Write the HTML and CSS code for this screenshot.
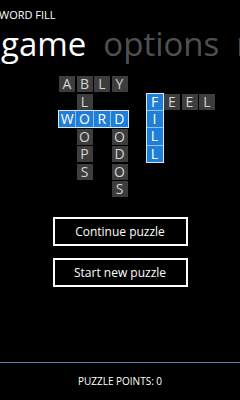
FILE: index.html
```html
<!DOCTYPE html>
<html lang="en">
<head>
  <meta charset="UTF-8" />
  <meta name="viewport" content="width=device-width, initial-scale=1.0"/>
  <title>Word Fill</title>
  <link rel="stylesheet" href="styles.css">
</head>
<body>

  <div class="app">
    <div class="titulo">WORD FILL</div>
    <div class="pivot">
      <span class="ativo">game</span>
      <span>options</span>
      <span>records</span>
    </div>

    <div class="grade">
      <div class="peca" style="grid-area: 1 / 1">A</div>
      <div class="peca" style="grid-area: 1 / 2">B</div>
      <div class="peca" style="grid-area: 1 / 3">L</div>
      <div class="peca" style="grid-area: 1 / 4">Y</div>
      <div class="peca" style="grid-area: 2 / 2">L</div>
      <div class="palavra" style="grid-area: 3 / 1 / 4 / 5">
        <span>W</span><span>O</span><span>R</span><span>D</span>
      </div>
      <div class="peca" style="grid-area: 4 / 2">O</div>
      <div class="peca" style="grid-area: 5 / 2">P</div>
      <div class="peca" style="grid-area: 6 / 2">S</div>
      <div class="peca" style="grid-area: 4 / 4">O</div>
      <div class="peca" style="grid-area: 5 / 4">D</div>
      <div class="peca" style="grid-area: 6 / 4">O</div>
      <div class="peca" style="grid-area: 7 / 4">S</div>
      <div class="palavra vertical" style="grid-area: 2 / 6 / 6 / 7">
        <span>F</span><span>I</span><span>L</span><span>L</span>
      </div>
      <div class="peca" style="grid-area: 2 / 7">E</div>
      <div class="peca" style="grid-area: 2 / 8">E</div>
      <div class="peca" style="grid-area: 2 / 9">L</div>
    </div>

    <div class="acoes">
      <button>Continue puzzle</button>
      <button>Start new puzzle</button>
    </div>

    <div class="rodape">PUZZLE POINTS: 0</div>
  </div>

</body>
</html>
```

FILE: styles.css
```css
body {
  margin: 0;
  background: #000;
  color: #fff;
  font-family: "Open Sans", "Liberation Sans", sans-serif;
  overflow: hidden;
}

.app {
  width: 240px;
  height: 400px;
  display: flex;
  flex-direction: column;
  overflow: hidden;
}

.titulo {
  font-size: 11px;
  line-height: 12px;
  margin-top: 9px;
  margin-left: -1px;
}

.pivot {
  white-space: nowrap;
  font-size: 33px;
  line-height: 36px;
  margin-top: 5px;
  margin-left: 1px;
  color: #505050;
  display: flex;
  gap: 17px;
}

.pivot .ativo {
  color: #fff;
}

.grade {
  display: grid;
  grid-template-columns: repeat(9, 16px);
  grid-template-rows: repeat(7, 16px);
  gap: 1.5px;
  margin-top: 14px;
  margin-left: 59px;
}

.peca {
  background: #3d3d3d;
  color: #d4d4d4;
  font-size: 14px;
  line-height: 16px;
  text-align: center;
}

.palavra {
  background: #1f7ed8;
  border: 1px solid #d8e8f8;
  margin: -1px;
  display: flex;
}

.palavra span {
  flex: 1;
  color: #fff;
  font-size: 14px;
  line-height: 16px;
  text-align: center;
  border-left: 1px solid #8fc0ee;
}

.palavra span:first-child {
  border-left: none;
}

.palavra.vertical {
  flex-direction: column;
}

.palavra.vertical span {
  border-left: none;
  border-top: 1px solid #8fc0ee;
  display: flex;
  align-items: center;
  justify-content: center;
}

.palavra.vertical span:first-child {
  border-top: none;
}

.acoes {
  display: flex;
  flex-direction: column;
  align-items: center;
  gap: 12px;
  margin-top: 20px;
}

button {
  width: 135px;
  height: 29px;
  background: #000;
  color: #fff;
  border: 2px solid #fff;
  font-family: "Open Sans", "Liberation Sans", sans-serif;
  font-size: 12px;
  padding: 0;
}

.rodape {
  margin-top: auto;
  height: 37px;
  border-top: 1px solid #5a7fa8;
  font-size: 10px;
  text-align: center;
  line-height: 36px;
}
```
